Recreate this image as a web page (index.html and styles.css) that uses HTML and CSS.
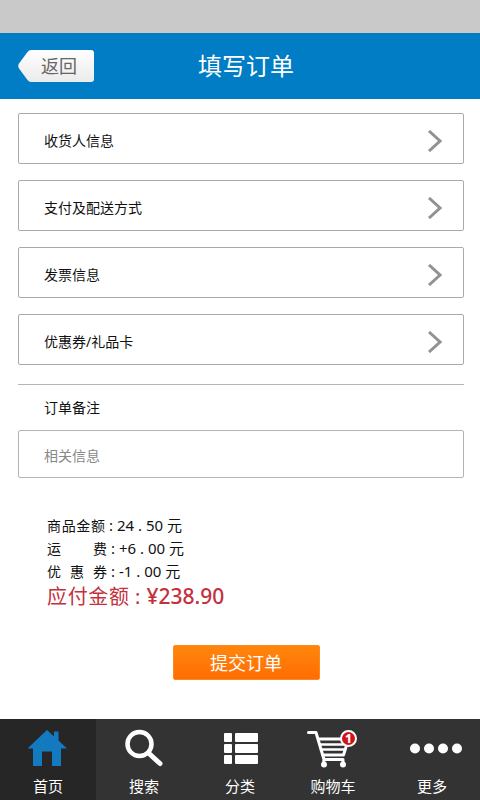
FILE: index.html
```html
<!DOCTYPE html>
<html lang="zh-CN">
<head>
<meta charset="utf-8">
<meta name="viewport" content="width=device-width, initial-scale=1">
<title>填写订单</title>
<link rel="stylesheet" href="styles.css">
</head>
<body>
<div class="status"></div>
<header class="header">
  <a class="back" href="#">
    <svg class="back-tip" width="13" height="32" viewBox="0 0 13 32" aria-hidden="true">
      <defs><linearGradient id="tip" x1="0" y1="0" x2="0" y2="1"><stop offset="0" stop-color="#fff"/><stop offset="1" stop-color="#ebebeb"/></linearGradient></defs>
      <path d="M13 0Q11 0 9.500 2L1 13.500Q-.5 16 1 18.500L9.500 30Q11 32 13 32Z" fill="url(#tip)"/>
    </svg>
    <span class="back-text">返回</span>
  </a>
  <h1 class="title">填写订单</h1>
</header>
<main class="main">
  <nav class="rows">
    <a class="row" href="#">收货人信息<svg class="chevron" viewBox="0 0 14 22"><path d="M1 1L12 11L1 21"/></svg></a>
    <a class="row" href="#">支付及配送方式<svg class="chevron" viewBox="0 0 14 22"><path d="M1 1L12 11L1 21"/></svg></a>
    <a class="row" href="#">发票信息<svg class="chevron" viewBox="0 0 14 22"><path d="M1 1L12 11L1 21"/></svg></a>
    <a class="row" href="#">优惠券/礼品卡<svg class="chevron" viewBox="0 0 14 22"><path d="M1 1L12 11L1 21"/></svg></a>
  </nav>
  <form class="form">
    <label class="note-label" for="note">订单备注</label>
    <input class="note" id="note" type="text" placeholder="相关信息">
    <dl class="costs">
      <div class="cost"><dt>商品金额</dt><dd>: 24 . 50 元</dd></div>
      <div class="cost spread"><dt>运 费</dt><dd>: +6 . 00 元</dd></div>
      <div class="cost spread"><dt>优 惠 券</dt><dd>: -1 . 00 元</dd></div>
      <div class="cost total"><dt>应付金额</dt><dd>:</dd><dd class="sum">¥238.90</dd></div>
    </dl>
    <button class="submit" type="button">提交订单</button>
  </form>
</main>
<nav class="tabs">
  <a class="tab active" href="#">
    <svg class="icon" width="40" height="40" viewBox="0 0 40 40" aria-hidden="true"><path fill="#147abf" d="M19 1L26 7.500V2.500H30.500V11.500L39 19.500H33V37H24V22.500H14V37H5V19.500H-.5Z"/></svg>
    <span>首页</span>
  </a>
  <a class="tab" href="#">
    <svg class="icon" width="40" height="40" viewBox="0 0 40 40" aria-hidden="true"><g fill="none" stroke="#fff"><circle cx="15.500" cy="15" r="12" stroke-width="4.500"/><path d="M24.500 24L36 34.500" stroke-width="5" stroke-linecap="round"/></g></svg>
    <span>搜索</span>
  </a>
  <a class="tab" href="#">
    <svg class="icon" width="40" height="40" viewBox="0 0 40 40" aria-hidden="true"><g fill="#fff"><rect x="4" y="4" width="8" height="9" rx="1"/><rect x="15" y="4" width="23" height="9" rx="1"/><rect x="4" y="15" width="8" height="9" rx="1"/><rect x="15" y="15" width="23" height="9" rx="1"/><rect x="4" y="26" width="8" height="9" rx="1"/><rect x="15" y="26" width="23" height="9" rx="1"/></g></svg>
    <span>分类</span>
  </a>
  <a class="tab tab-cart" href="#">
    <span class="cart">
      <svg class="icon" width="52" height="40" viewBox="0 0 52 40" aria-hidden="true"><g fill="none" stroke="#fff" stroke-width="3" stroke-linecap="round" stroke-linejoin="round"><path d="M1.500 3.500H9L17 30.500H36M17 30.500L16.500 35M36 30.500V35"/><path d="M12 10H34M39 18L36.500 26H16"/><path d="M13 15.500H38M14 20.500H38" stroke-width="2.500"/></g><circle cx="17" cy="35.500" r="3" fill="#fff"/><circle cx="36" cy="35.500" r="3" fill="#fff"/></svg>
      <span class="badge">1</span>
    </span>
    <span>购物车</span>
  </a>
  <a class="tab" href="#">
    <svg class="icon" width="60" height="40" viewBox="0 0 60 40" aria-hidden="true"><g fill="#fff"><circle cx="13" cy="19.500" r="5"/><circle cx="27" cy="19.500" r="5"/><circle cx="41" cy="19.500" r="5"/><circle cx="55" cy="19.500" r="5"/></g></svg>
    <span>更多</span>
  </a>
</nav>
</body>
</html>
```
FILE: styles.css
```css
* { box-sizing: border-box; }
body {
  margin: 0;
  min-height: 100vh;
  display: flex;
  flex-direction: column;
  background: #fff;
  color: #111;
  font: 14px/22px "Noto Sans", "Noto Sans CJK SC", sans-serif;
}
a { color: inherit; text-decoration: none; }
.status { height: 33px; background: #c9c9c9; }
.header {
  display: grid;
  grid-template-columns: 1fr auto 1fr;
  align-items: center;
  height: 66px;
  padding: 0 6px 0 18px;
  background: #007dc5;
}
.back { display: flex; justify-self: start; }
.back-tip { display: block; }
.back-text {
  height: 32px;
  padding: 0 17px 0 10px;
  border-radius: 0 3px 3px 0;
  background: linear-gradient(#fff, #ebebeb);
  color: #666;
  font-size: 18px;
  line-height: 32px;
}
.title { margin: 0; color: #fff; font-size: 24px; line-height: 32px; font-weight: 400; }
.main { flex: 1; padding: 14px 16px 0 18px; }
.rows {
  display: flex;
  flex-direction: column;
  gap: 16px;
  padding-bottom: 19px;
  border-bottom: 1px solid #b4b4b4;
}
.row {
  display: flex;
  align-items: center;
  justify-content: space-between;
  height: 51px;
  padding: 4px 21px 0 25px;
  border: 1px solid #aaa;
  border-radius: 2px;
}
.chevron {
  width: 14px;
  height: 22px;
  fill: none;
  stroke: #929292;
  stroke-width: 3;
}
.form { display: flex; flex-direction: column; }
.note-label { padding: 12px 26px 11px; }
.note {
  height: 48px;
  padding: 3px 25px 0;
  border: 1px solid #b4b4b4;
  border-radius: 2px;
  background: #fff;
  color: #111;
  font: inherit;
}
.note::placeholder { color: #888; opacity: 1; }
.costs { margin: 36px 29px 0; line-height: 23px; }
.cost { display: flex; align-items: baseline; gap: 4px; height: 23px; }
.cost dt { width: 58px; text-align-last: justify; }
.cost dd { margin: 0; font-size: 15px; }
.spread dt { width: 60px; }
.total { gap: 6px; height: 28px; color: #c4303c; font-size: 20px; line-height: 26px; }
.total dt { width: 82px; }
.total dd { font-size: 20px; }
.total .sum { font-size: 21px; font-weight: 500; }
.submit {
  align-self: center;
  width: 147px;
  height: 35px;
  margin: 34px 0 0 10px;
  padding: 0;
  border: 1px solid #ff8a1c;
  border-radius: 2px;
  background: linear-gradient(#ff860c, #ff6d03);
  color: #fff;
  font: 18px/32px "Noto Sans", "Noto Sans CJK SC", sans-serif;
}
.tabs {
  display: grid;
  grid-template-columns: repeat(5, 1fr);
  height: 81px;
  background: #333;
  color: #fff;
}
.tab {
  display: flex;
  flex-direction: column;
  align-items: center;
  gap: 6px;
  padding-top: 10px;
  font-size: 15px;
}
.tab-cart { padding-right: 6px; }
.active { background: #262626; }
.icon { display: block; }
.cart { position: relative; }
.badge {
  position: absolute;
  top: 1px;
  right: 2px;
  width: 17px;
  height: 17px;
  border: 2px solid #fff;
  border-radius: 50%;
  background: #d1121b;
  font-size: 12px;
  line-height: 13px;
  font-weight: 800;
  text-align: center;
}
```
